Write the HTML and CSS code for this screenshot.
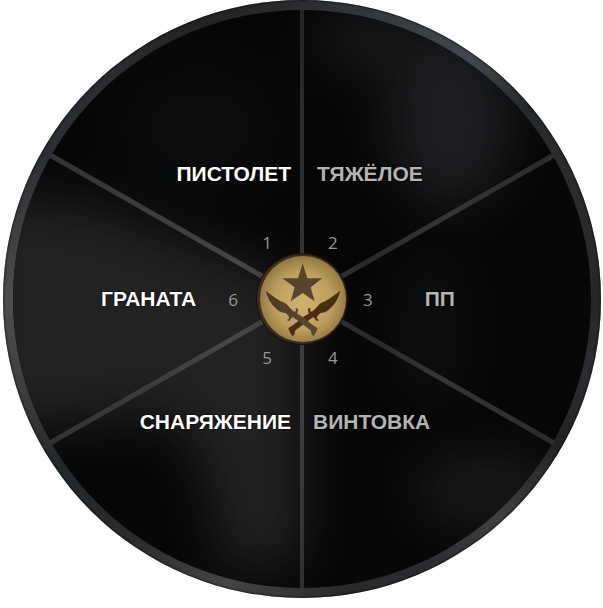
FILE: index.html
```html
<!DOCTYPE html>
<html lang="ru">
<head>
<meta charset="utf-8">
<meta name="viewport" content="width=device-width, initial-scale=1">
<title>Меню закупки</title>
<link rel="stylesheet" href="styles.css">
</head>
<body>
<main class="page">
  <nav class="wheel" aria-label="Меню закупки">
    <svg class="wheel-art" viewBox="3 0 598 598" aria-hidden="true">
      <defs>
        <clipPath id="disc"><circle cx="302" cy="299" r="289"/></clipPath>
        <filter id="soft" x="-60%" y="-60%" width="220%" height="220%" color-interpolation-filters="sRGB"><feGaussianBlur stdDeviation="26"/></filter>
        <radialGradient id="gold" cx="50%" cy="52%" r="52%">
          <stop offset="0" stop-color="#d2b36c"/>
          <stop offset=".65" stop-color="#bd9e5c"/>
          <stop offset="1" stop-color="#94773f"/>
        </radialGradient>
        <linearGradient id="blade" x1="0" y1="0" x2="1" y2="1">
          <stop offset="0" stop-color="#493a28"/>
          <stop offset="1" stop-color="#5d4932"/>
        </linearGradient>
        <linearGradient id="spoke" gradientUnits="userSpaceOnUse" x1="50" y1="0" x2="552" y2="0">
          <stop offset="0" stop-color="#323232"/>
          <stop offset=".38" stop-color="#464646"/>
          <stop offset=".5" stop-color="#343536"/>
          <stop offset=".64" stop-color="#29292a"/>
          <stop offset=".78" stop-color="#343537"/>
          <stop offset="1" stop-color="#2c2c2d"/>
        </linearGradient>
        <linearGradient id="spoke-v" x1="0" y1="0" x2="0" y2="1">
          <stop offset="0" stop-color="#252627"/>
          <stop offset=".35" stop-color="#2f3031"/>
          <stop offset=".65" stop-color="#414142"/>
          <stop offset="1" stop-color="#303031"/>
        </linearGradient>
        <path id="knife" d="M62 152 C76 163 92 175 106 183 C112 187 119 187 124 192 L137 206 L148 215 C154 214 154 210 151 206 C157 203 162 208 158 213 L157 221 L169 228 L204 256 L218 264 L214 276 L206 288 L200 284 L198 272 L161 244 L144 232 L137 236 C137 242 131 245 126 240 L131 237 C133 233 132 230 130 227 L122 219 C112 220 101 214 92 205 C77 191 67 173 62 152 Z"/>
      </defs>
      <g clip-path="url(#disc)">
        <rect x="3" y="0" width="598" height="598" fill="#070707"/>
        <g filter="url(#soft)">
          <path d="M-30 195 L90 205 L250 265 L302 299 L302 560 L225 570 L205 470 L170 415 L-20 430 Z" fill="#222"/>
          <ellipse cx="450" cy="120" rx="60" ry="85" fill="#1d1f22"/>
          <ellipse cx="370" cy="40" rx="55" ry="28" fill="#181a1c"/>
          <ellipse cx="485" cy="490" rx="70" ry="35" fill="#1b1b1b"/>
          <ellipse cx="430" cy="330" rx="30" ry="80" fill="#0f1011"/>
          <ellipse cx="200" cy="130" rx="80" ry="60" fill="#0b0d0e"/>
        </g>
      </g>
      <g stroke="url(#spoke)" stroke-width="5">
        <path d="M50 155 L554 443 M50 443 L554 155"/>
      </g>
      <rect x="300" y="10" width="4" height="579" fill="url(#spoke-v)"/>
      <circle cx="302" cy="299" r="46" fill="#17130f"/>
      <circle cx="302" cy="299" r="45" fill="#3a2c1f"/>
      <circle cx="303" cy="299" r="43" fill="url(#gold)"/>
      <g transform="translate(245 240) scale(.3333)">
        <path d="M173 70 L187 115 L232 115 L197 142 L209 184 L173 159 L137 184 L149 142 L112 115 L159 115 Z" fill="#57442f"/>
        <use href="#knife" transform="translate(348 0) scale(-1 1)" fill="#4b2d14"/>
        <use href="#knife" fill="url(#blade)"/>
      </g>
    </svg>
    <div class="options">
      <button class="option option-top option-left" type="button"><span class="name">ПИСТОЛЕТ</span><span class="key">1</span></button>
      <button class="option option-top option-right inset muted" type="button"><span class="name">ТЯЖЁЛОЕ</span><span class="key">2</span></button>
      <button class="option option-side option-left" type="button"><span class="name">ГРАНАТА</span><span class="key">6</span></button>
      <button class="option option-side option-right muted" type="button"><span class="key">3</span><span class="name">ПП</span></button>
      <button class="option option-bottom option-left" type="button"><span class="key">5</span><span class="name">СНАРЯЖЕНИЕ</span></button>
      <button class="option option-bottom option-right muted" type="button"><span class="key">4</span><span class="name">ВИНТОВКА</span></button>
    </div>
  </nav>
</main>
</body>
</html>
```
FILE: styles.css
```css
* {
  box-sizing: border-box;
}

body {
  margin: 0;
  background: #fff;
}

.page {
  padding: 0 2px 0 3px;
}

.wheel {
  position: relative;
  aspect-ratio: 1;
  border-radius: 50%;
  background: conic-gradient(
    #2a2c2f 0deg, #3a3f44 22deg, #41474d 36deg, #25282b 50deg,
    #2b2c2e 62deg, #27282a 90deg, #2b2c32 105deg, #232323 120deg,
    #404040 138deg, #2a2b30 155deg, #2a2a2a 172deg, #444 195deg,
    #2b2b2b 215deg, #22272a 236deg, #3c3c3c 250deg, #4e4e4e 270deg,
    #414141 282deg, #2b2e35 300deg, #2a2c2f 320deg, #232323 340deg,
    #2a2c2f 360deg);
  box-shadow: inset 0 0 3px #000;
}

.wheel-art {
  position: absolute;
  inset: 0;
  width: 100%;
  height: 100%;
}

.options {
  position: relative;
  display: grid;
  grid-template-columns: 1fr 1fr;
  grid-template-rows: 1fr 24px 1fr;
  row-gap: 32px;
  height: 100%;
}

.option {
  display: flex;
  flex-direction: column;
  margin: 0;
  padding: 0;
  border: 0;
  background: none;
  color: #fff;
  cursor: pointer;
}

.option-left {
  align-items: flex-end;
  padding-right: 11px;
}

.option-right {
  align-items: flex-start;
  padding-left: 11px;
}

.option-right.inset {
  padding-left: 15px;
}

.option-top {
  justify-content: flex-end;
  gap: 45px;
}

.option-bottom {
  justify-content: flex-start;
  gap: 40px;
  padding-top: 3px;
}

.option-side {
  flex-direction: row;
  align-items: baseline;
}

.option-side.option-left {
  justify-content: flex-end;
  gap: 32px;
  padding-right: 64px;
}

.option-side.option-right {
  justify-content: flex-start;
  gap: 52px;
  padding-left: 61px;
}

.name {
  font: bold 21px/24px "Liberation Sans", Arial, sans-serif;
  text-shadow: 0 0 2px #000;
}

.muted .name {
  color: #b4b4b4;
}

.key {
  color: #969696;
  font: 17px/24px "Open Sans", "Noto Sans", sans-serif;
}

.option-top .key,
.option-bottom .key {
  margin: 0 19px;
}

.option-right.inset .key {
  margin: 0 11px;
}

.option-bottom.option-right .key {
  margin: 0 15px;
}
```
